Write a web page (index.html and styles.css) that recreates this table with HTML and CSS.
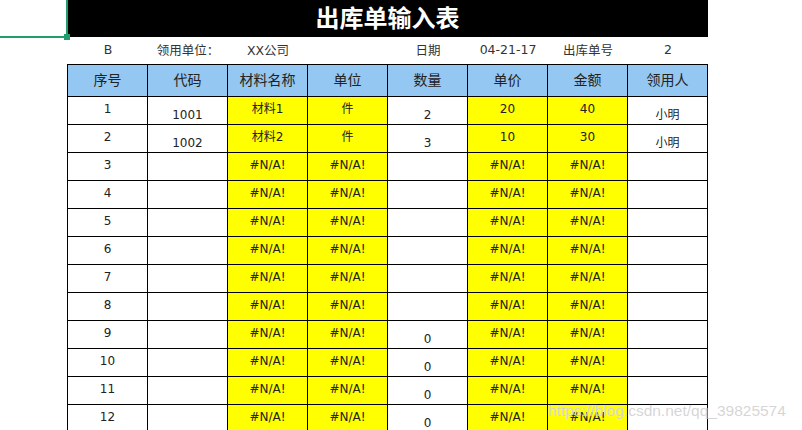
FILE: index.html
```html
<!DOCTYPE html>
<html lang="zh">
<head>
<meta charset="utf-8">
<title>出库单输入表</title>
<link rel="stylesheet" href="styles.css">
</head>
<body>
<div class="sheet">
  <div class="title">出库单输入表</div>
  <div class="info">
    <span>B</span>
    <span>领用单位：</span>
    <span>XX公司</span>
    <span></span>
    <span>日期</span>
    <span>04-21-17</span>
    <span>出库单号</span>
    <span>2</span>
  </div>
  <table class="grid">
    <thead>
      <tr><th>序号</th><th>代码</th><th>材料名称</th><th>单位</th><th>数量</th><th>单价</th><th>金额</th><th>领用人</th></tr>
    </thead>
    <tbody>
      <tr><td>1</td><td class="dn">1001</td><td class="y">材料1</td><td class="y">件</td><td class="dn">2</td><td class="y">20</td><td class="y">40</td><td class="dn">小明</td></tr>
      <tr><td>2</td><td class="dn">1002</td><td class="y">材料2</td><td class="y">件</td><td class="dn">3</td><td class="y">10</td><td class="y">30</td><td class="dn">小明</td></tr>
      <tr><td>3</td><td></td><td class="y">#N/A!</td><td class="y">#N/A!</td><td></td><td class="y">#N/A!</td><td class="y">#N/A!</td><td></td></tr>
      <tr><td>4</td><td></td><td class="y">#N/A!</td><td class="y">#N/A!</td><td></td><td class="y">#N/A!</td><td class="y">#N/A!</td><td></td></tr>
      <tr><td>5</td><td></td><td class="y">#N/A!</td><td class="y">#N/A!</td><td></td><td class="y">#N/A!</td><td class="y">#N/A!</td><td></td></tr>
      <tr><td>6</td><td></td><td class="y">#N/A!</td><td class="y">#N/A!</td><td></td><td class="y">#N/A!</td><td class="y">#N/A!</td><td></td></tr>
      <tr><td>7</td><td></td><td class="y">#N/A!</td><td class="y">#N/A!</td><td></td><td class="y">#N/A!</td><td class="y">#N/A!</td><td></td></tr>
      <tr><td>8</td><td></td><td class="y">#N/A!</td><td class="y">#N/A!</td><td></td><td class="y">#N/A!</td><td class="y">#N/A!</td><td></td></tr>
      <tr><td>9</td><td></td><td class="y">#N/A!</td><td class="y">#N/A!</td><td class="dn">0</td><td class="y">#N/A!</td><td class="y">#N/A!</td><td></td></tr>
      <tr><td>10</td><td></td><td class="y">#N/A!</td><td class="y">#N/A!</td><td class="dn">0</td><td class="y">#N/A!</td><td class="y">#N/A!</td><td></td></tr>
      <tr><td>11</td><td></td><td class="y">#N/A!</td><td class="y">#N/A!</td><td class="dn">0</td><td class="y">#N/A!</td><td class="y">#N/A!</td><td></td></tr>
      <tr><td>12</td><td></td><td class="y">#N/A!</td><td class="y">#N/A!</td><td class="dn">0</td><td class="y">#N/A!</td><td class="y">#N/A!</td><td></td></tr>
    </tbody>
  </table>
</div>
<div class="selection"><span class="handle"></span></div>
<div class="watermark">https://blog.csdn.net/qq_39825574</div>
</body>
</html>
```
FILE: styles.css
```css
html, body {
  margin: 0;
  padding: 0;
  background: #fff;
}
body {
  position: relative;
  width: 802px;
  height: 430px;
  overflow: hidden;
  font-family: "DejaVu Sans", "Noto Sans CJK SC", sans-serif;
  color: #222;
}
.sheet {
  margin-left: 67px;
  width: 641px;
}
.title {
  height: 37px;
  background: #000;
  color: #fff;
  font-family: "Noto Sans CJK SC", sans-serif;
  font-weight: 700;
  font-size: 24px;
  line-height: 33px;
  text-align: center;
}
.info {
  display: grid;
  grid-template-columns: repeat(8, 80px);
  height: 27px;
  align-items: center;
  font-size: 12.5px;
  color: #333;
  padding-left: 1px;
}
.info span {
  text-align: center;
  padding-bottom: 3px;
}
.grid {
  border-collapse: collapse;
  table-layout: fixed;
  width: 641px;
}
.grid th, .grid td {
  width: 80px;
  border: 1px solid #000;
  text-align: center;
  padding: 0;
}
.grid th {
  height: 32px;
  background: #94c7f1;
  font-weight: 400;
  font-size: 14px;
  color: #222;
  padding-bottom: 4px;
  box-sizing: border-box;
}
.grid tbody tr {
  height: 28px;
}
.grid td {
  font-size: 12px;
  line-height: 14px;
  color: #222;
  vertical-align: middle;
  padding-bottom: 3px;
}
.grid td.y {
  background: #ffff00;
}
.grid td.dn {
  padding-bottom: 0;
  padding-top: 8px;
}
.selection {
  position: absolute;
  left: 0;
  top: 0;
  width: 68px;
  height: 38px;
  box-sizing: border-box;
  border-right: 2px solid #1f9d6b;
  border-bottom: 2px solid #1f9d6b;
}
.handle {
  position: absolute;
  right: -4px;
  bottom: -4px;
  width: 6px;
  height: 6px;
  background: #1f9d6b;
}
.watermark {
  position: absolute;
  left: 548px;
  top: 402px;
  font-family: "Liberation Sans", Arial, sans-serif;
  font-size: 15.5px;
  color: rgba(200, 200, 200, 0.75);
  text-shadow: 0 0 1px rgba(255, 255, 255, 0.8);
  white-space: nowrap;
}
```
